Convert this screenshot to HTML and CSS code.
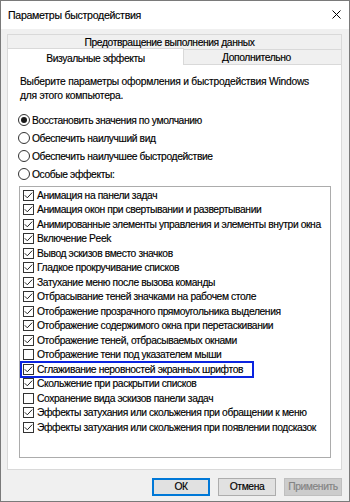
FILE: index.html
```html
<!DOCTYPE html>
<html lang="ru">
<head>
<meta charset="utf-8">
<title>Параметры быстродействия</title>
<link rel="stylesheet" href="styles.css">
</head>
<body>
<div class="window">
  <div class="titlebar">
    <span class="title">Параметры быстродействия</span>
    <svg class="close" width="9" height="9" viewBox="0 0 9 9"><path d="M0.5 0.5 L8.5 8.5 M8.5 0.5 L0.5 8.5" stroke="#000" stroke-width="1" fill="none"/></svg>
  </div>
  <div class="body">
    <div class="tabrow back">
      <div class="tab full">Предотвращение выполнения данных</div>
    </div>
    <div class="tabrow front">
      <div class="tab selected">Визуальные эффекты</div>
      <div class="tab other">Дополнительно</div>
    </div>
    <div class="panel">
      <p class="desc">Выберите параметры оформления и быстродействия Windows<br>для этого компьютера.</p>
      <div class="radios">
        <div class="radio checked"><span class="rbox"></span><span>Восстановить значения по умолчанию</span></div>
        <div class="radio"><span class="rbox"></span><span>Обеспечить наилучший вид</span></div>
        <div class="radio"><span class="rbox"></span><span>Обеспечить наилучшее быстродействие</span></div>
        <div class="radio"><span class="rbox"></span><span>Особые эффекты:</span></div>
      </div>
      <div class="listbox">
        <div class="item on"><span class="cbox"></span><span>Анимация на панели задач</span></div>
        <div class="item on"><span class="cbox"></span><span>Анимация окон при свертывании и развертывании</span></div>
        <div class="item on"><span class="cbox"></span><span>Анимированные элементы управления и элементы внутри окна</span></div>
        <div class="item on"><span class="cbox"></span><span>Включение Peek</span></div>
        <div class="item on"><span class="cbox"></span><span>Вывод эскизов вместо значков</span></div>
        <div class="item on"><span class="cbox"></span><span>Гладкое прокручивание списков</span></div>
        <div class="item on"><span class="cbox"></span><span>Затухание меню после вызова команды</span></div>
        <div class="item on"><span class="cbox"></span><span>Отбрасывание теней значками на рабочем столе</span></div>
        <div class="item on"><span class="cbox"></span><span>Отображение прозрачного прямоугольника выделения</span></div>
        <div class="item on"><span class="cbox"></span><span>Отображение содержимого окна при перетаскивании</span></div>
        <div class="item on"><span class="cbox"></span><span>Отображение теней, отбрасываемых окнами</span></div>
        <div class="item"><span class="cbox"></span><span>Отображение тени под указателем мыши</span></div>
        <div class="item on marked"><span class="cbox"></span><span>Сглаживание неровностей экранных шрифтов</span></div>
        <div class="item on"><span class="cbox"></span><span>Скольжение при раскрытии списков</span></div>
        <div class="item"><span class="cbox"></span><span>Сохранение вида эскизов панели задач</span></div>
        <div class="item on"><span class="cbox"></span><span>Эффекты затухания или скольжения при обращении к меню</span></div>
        <div class="item on"><span class="cbox"></span><span>Эффекты затухания или скольжения при появлении подсказок</span></div>
      </div>
    </div>
    <div class="buttons">
      <button class="btn default">ОК</button>
      <button class="btn">Отмена</button>
      <button class="btn disabled">Применить</button>
    </div>
  </div>
</div>
</body>
</html>
```
FILE: styles.css
```css
* { box-sizing: border-box; }
html, body { margin: 0; padding: 0; }
body {
  font-family: "Liberation Sans", Arial, sans-serif;
  font-size: 10.3px;
  letter-spacing: -0.4px;
  color: #000;
  background: #ffffff;
  -webkit-text-stroke: 0.15px #000;
}
.window {
  width: 350px;
  height: 502px;
  border: 1px solid #7a7a7a;
  background: #f0f0f0;
  display: flex;
  flex-direction: column;
  overflow: hidden;
}
.titlebar {
  height: 28px;
  flex: none;
  background: #fff;
  display: flex;
  align-items: center;
  justify-content: space-between;
  padding: 0 8px 0 7px;
  font-size: 10.6px;
  letter-spacing: -0.3px;
}
.close { margin-top: -2px; }
.body {
  flex: 1;
  display: flex;
  flex-direction: column;
  padding: 5px 7px 0 6px;
}
.tabrow {
  display: flex;
  align-items: flex-start;
  height: 15px;
  flex: none;
}
.tab {
  height: 15px;
  border: 1px solid #d9d9d9;
  border-bottom: none;
  background: #f0f0f0;
  display: flex;
  align-items: center;
  justify-content: center;
  white-space: nowrap;
  line-height: 13px;
}
.tab.full { flex: 1; padding-right: 10px; }
.tab.selected {
  width: 177px;
  height: 17px;
  margin-top: -1px;
  background: #fff;
  position: relative;
  z-index: 1;
  padding-top: 2px;
}
.tab.other { flex: 1; margin-left: -1px; padding-right: 12px; }
.panel {
  flex: none;
  background: #fff;
  border: 1px solid #d9d9d9;
  padding: 10px 10px 11px 11px;
}
.desc {
  margin: 0 0 0 1px;
  line-height: 14px;
  white-space: nowrap;
  letter-spacing: -0.25px;
}
.radios { margin-top: 8px; }
.radio {
  height: 18px;
  display: flex;
  align-items: center;
  gap: 2px;
  margin-left: -1px;
  white-space: nowrap;
}
.rbox {
  width: 12px;
  height: 12px;
  border: 1px solid #333;
  border-radius: 50%;
  background: #fff;
  display: flex;
  align-items: center;
  justify-content: center;
  flex: none;
}
.radio.checked .rbox::after {
  content: "";
  width: 6px;
  height: 6px;
  border-radius: 50%;
  background: #1a1a1a;
}
.listbox {
  margin-top: 3px;
  height: 272px;
  border: 1px solid #acacac;
  background: #fff;
  padding-top: 1px;
}
.item {
  height: 14.5px;
  display: flex;
  align-items: center;
  gap: 3px;
  margin-left: 1px;
  padding-left: 2px;
  white-space: nowrap;
}
.cbox {
  width: 11px;
  height: 11px;
  border: 1px solid #333;
  background: #fff;
  flex: none;
}
.item.on .cbox {
  background-image: url("data:image/svg+xml;utf8,<svg xmlns='http://www.w3.org/2000/svg' width='9' height='9' viewBox='0 0 9 9'><path d='M0.8 4.3 L3.3 6.8 L8.2 1.6' stroke='%23222' stroke-width='1' fill='none'/></svg>");
  background-repeat: no-repeat;
  background-position: 0 0;
}
.item.marked {
  width: 232px;
  outline: 2px solid #0a24e0;
  outline-offset: -1px;
}
.buttons {
  margin-top: 8px;
  display: flex;
  justify-content: flex-end;
  gap: 8px;
  flex: none;
}
.btn {
  width: 58px;
  height: 18px;
  padding: 0;
  font: inherit;
  letter-spacing: inherit;
  color: #000;
  background: #e1e1e1;
  border: 1px solid #adadad;
  line-height: 14px;
}
.btn.default { border: 1px solid #0078d7; box-shadow: inset 0 0 0 1px #0078d7; }
.btn.disabled { background: #cccccc; border-color: #bfbfbf; color: #838383; -webkit-text-stroke: 0.15px #838383; }
```
